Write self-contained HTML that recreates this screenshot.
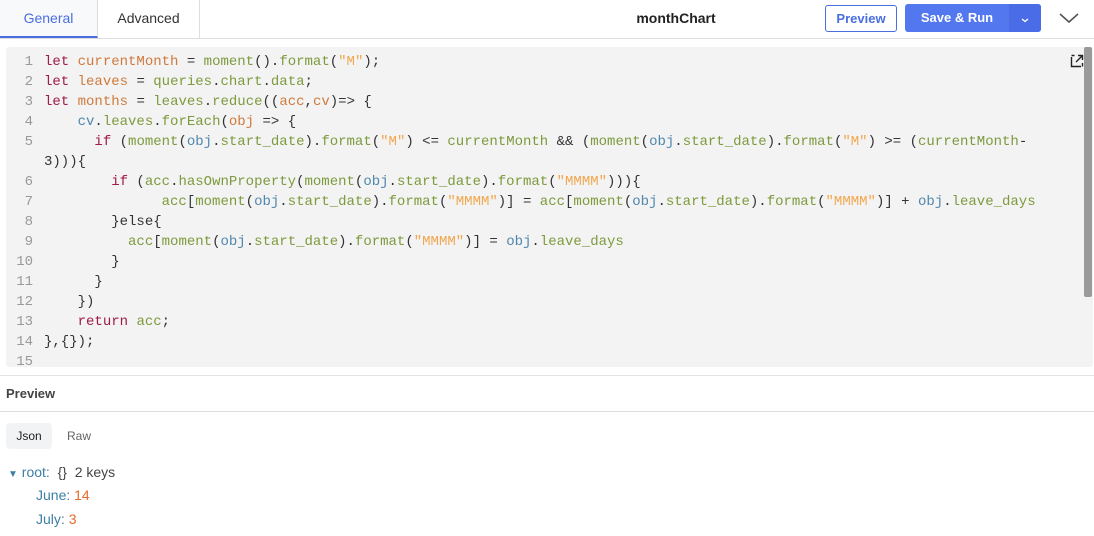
<!DOCTYPE html><html><head><style>
body{margin:0;width:1094px;height:536px;background:#fff;font-family:"Liberation Sans",sans-serif;position:relative;overflow:hidden}
.top{position:absolute;left:0;top:0;width:1094px;height:38px;border-bottom:1px solid #ddd}
.tab{position:absolute;top:0;height:38px;line-height:36px;font-size:14px;text-align:center}
.ed{position:absolute;left:6px;top:47px;width:1087px;height:320px;background:#f3f3f3;border-radius:3px}
pre{margin:0;position:absolute;left:0;top:5px;font-family:"Liberation Mono",monospace;font-size:14px;line-height:20px;color:#333}
.ln{display:inline-block;width:27px;text-align:right;color:#999;margin-right:11px}
.k{color:#a01b48}.v{color:#cf7a3c}.f{color:#7d9a3d}.s{color:#f2a74e}.o{color:#4f87ad}
</style></head><body>
<div class="top">
<div class="tab" style="left:0;width:97px;color:#4a6ee0;border-bottom:2px solid #4a6ee0;border-right:1px solid #ddd;height:36px;background:#f8f9fb">General</div>
<div class="tab" style="left:98px;width:101px;color:#333;border-right:1px solid #ddd">Advanced</div>
<div class="tab" style="left:600px;width:152px;font-weight:bold;font-size:14px;color:#222">monthChart</div>
<div style="position:absolute;left:825px;top:5px;width:70px;height:25px;border:1px solid #4a6ee0;border-radius:3px;color:#4a6ee0;font-weight:bold;font-size:13px;line-height:25px;text-align:center">Preview</div>
<div style="position:absolute;left:905px;top:4px;width:136px;height:28px;background:#5277ef;border-radius:3px;color:#fff;font-weight:bold;font-size:13px;line-height:28px">
<span style="position:absolute;left:0;width:104px;text-align:center">Save &amp; Run</span>
<span style="position:absolute;left:104px;top:0;width:32px;height:28px;background:#4a6ce6;border-radius:0 3px 3px 0;display:block"><svg style="display:block" width="32" height="28"><path d="M13 15l3 2.5 3-2.5" stroke="#fff" fill="none" stroke-width="1.3"/></svg></span></div>
<svg style="position:absolute;left:1058px;top:10px" width="24" height="16"><path d="M2 4l9 8 9-8" stroke="#555" fill="none" stroke-width="1.6"/></svg>
</div>
<div class="ed">
<svg style="position:absolute;left:1064px;top:7px" width="14" height="14"><path d="M1.5 3v9.5h9.5M6 8l6-6M8 1.5h4.5V6M1.5 1.5h3M12.5 9v3.5" stroke="#222" fill="none" stroke-width="1.4"/></svg>
<div style="position:absolute;left:1078px;top:0;width:8px;height:250px;background:#9a9a9a;border-radius:2px"></div>
<pre><span class="ln">1</span><span class="k">let</span> <span class="v">currentMonth</span> = <span class="f">moment</span>().<span class="f">format</span>(<span class="s">"M"</span>);
<span class="ln">2</span><span class="k">let</span> <span class="v">leaves</span> = <span class="f">queries</span>.<span class="f">chart</span>.<span class="f">data</span>;
<span class="ln">3</span><span class="k">let</span> <span class="v">months</span> = <span class="f">leaves</span>.<span class="f">reduce</span>((<span class="v">acc</span>,<span class="v">cv</span>)=> {
<span class="ln">4</span>    <span class="o">cv</span>.<span class="f">leaves</span>.<span class="f">forEach</span>(<span class="v">obj</span> => {
<span class="ln">5</span>      <span class="k">if</span> (<span class="f">moment</span>(<span class="o">obj</span>.<span class="f">start_date</span>).<span class="f">format</span>(<span class="s">"M"</span>) &lt;= <span class="f">currentMonth</span> &amp;&amp; (<span class="f">moment</span>(<span class="o">obj</span>.<span class="f">start_date</span>).<span class="f">format</span>(<span class="s">"M"</span>) >= (<span class="f">currentMonth</span>-
<span class="ln"></span>3))){
<span class="ln">6</span>        <span class="k">if</span> (<span class="f">acc</span>.<span class="f">hasOwnProperty</span>(<span class="f">moment</span>(<span class="o">obj</span>.<span class="f">start_date</span>).<span class="f">format</span>(<span class="s">"MMMM"</span>))){
<span class="ln">7</span>              <span class="f">acc</span>[<span class="f">moment</span>(<span class="o">obj</span>.<span class="f">start_date</span>).<span class="f">format</span>(<span class="s">"MMMM"</span>)] = <span class="f">acc</span>[<span class="f">moment</span>(<span class="o">obj</span>.<span class="f">start_date</span>).<span class="f">format</span>(<span class="s">"MMMM"</span>)] + <span class="o">obj</span>.<span class="f">leave_days</span>
<span class="ln">8</span>        }else{
<span class="ln">9</span>          <span class="f">acc</span>[<span class="f">moment</span>(<span class="o">obj</span>.<span class="f">start_date</span>).<span class="f">format</span>(<span class="s">"MMMM"</span>)] = <span class="o">obj</span>.<span class="f">leave_days</span>
<span class="ln">10</span>        }
<span class="ln">11</span>      }
<span class="ln">12</span>    })
<span class="ln">13</span>    <span class="k">return</span> <span class="f">acc</span>;
<span class="ln">14</span>},{});
<span class="ln">15</span></pre>
</div>
<div style="position:absolute;left:0;top:375px;width:1094px;border-top:1px solid #e3e3e3"></div>
<div style="position:absolute;left:6px;top:386px;font-size:13px;color:#444;font-weight:bold">Preview</div>
<div style="position:absolute;left:0;top:411px;width:1094px;border-top:1px solid #ddd"></div>
<div style="position:absolute;left:6px;top:423px;width:46px;height:26px;background:#f2f3f5;border-radius:4px;font-size:12px;line-height:26px;text-align:center;color:#222">Json</div>
<div style="position:absolute;left:67px;top:423px;font-size:12px;line-height:26px;color:#666">Raw</div>
<div style="position:absolute;left:8px;top:463px;font-size:14px;line-height:18px;color:#444"><span style="color:#3d7fa6;font-size:10px">▼</span> <span style="color:#3d7fa6">root:</span>&nbsp; {}&nbsp; 2 keys</div>
<div style="position:absolute;left:36px;top:486px;font-size:14px;line-height:18px"><span style="color:#3d7fa6">June:</span> <span style="color:#e8682a">14</span></div>
<div style="position:absolute;left:36px;top:510px;font-size:14px;line-height:18px"><span style="color:#3d7fa6">July:</span> <span style="color:#e8682a">3</span></div>
</body></html>
